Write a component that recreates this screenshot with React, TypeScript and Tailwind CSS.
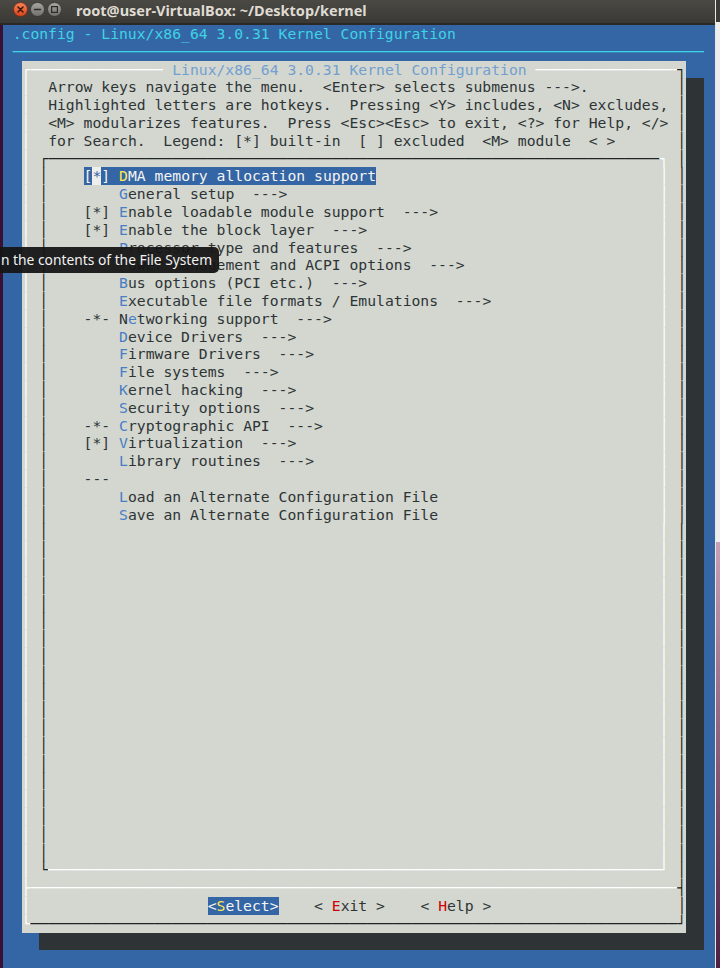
import React from "react";

// terminal colours (tango palette, as gnome-terminal draws it)
const FG = {
  ink: "text-[#2e3436]",
  line: "text-[#1f2324]",
  hi: "text-[#ffffff]",
  cyan: "text-[#3fd4e4]",
  title: "text-[#729fcf]",
  key: "text-[#4a7dc4]",
  sel: "text-[#f4f4f2]",
  yellow: "text-[#fce94f]",
  red: "text-[#cc0000]",
  cursor: "text-[#3465a4]",
} as const;

const BG = {
  blue: "bg-[#3465a4]",
  gray: "bg-[#d3d7cf]",
  shadow: "bg-[#2e3436]",
  cursor: "bg-[#eeeeec]",
} as const;

type Fg = keyof typeof FG;
type Bg = keyof typeof BG;
type Seg = { t: string; f: Fg; b: Bg };

const s = (t: string, f: Fg = "ink", b: Bg = "gray"): Seg => ({ t, f, b });
const sp = (n: number, b: Bg = "gray"): Seg => ({ t: " ".repeat(n), f: "ink", b });
const len = (segs: Seg[]) => segs.reduce((n, g) => n + g.t.length, 0);
const fill = (segs: Seg[], width: number, b: Bg = "gray") => {
  const n = width - len(segs);
  return n > 0 ? [...segs, sp(n, b)] : segs;
};
const h = (n: number, f: Fg) => s("─".repeat(n), f);

// one row of the dialog: cols 0-1 blue, 2 left edge, 3..75 body, 76 right edge, 77-78 shadow
function dlg(left: Seg, body: Seg[], right: Seg, shadow = true): Seg[] {
  return [sp(2, "blue"), left, ...fill(body, 73), right, sp(2, shadow ? "shadow" : "blue"), sp(1, "blue")];
}

const V_HI = s("│", "hi");
const V_DK = s("│", "line");

const PROMPT = [
  "Arrow keys navigate the menu.  <Enter> selects submenus --->.",
  "Highlighted letters are hotkeys.  Pressing <Y> includes, <N> excludes,",
  "<M> modularizes features.  Press <Esc><Esc> to exit, <?> for Help, </>",
  "for Search.  Legend: [*] built-in  [ ] excluded  <M> module  < >",
];

type Item = { p: string; a?: string; k: string; r: string };

const ITEMS: Item[] = [
  { p: "    ", k: "G", r: "eneral setup  --->" },
  { p: "[*] ", k: "E", r: "nable loadable module support  --->" },
  { p: "[*] ", k: "E", r: "nable the block layer  --->" },
  { p: "    ", k: "P", r: "rocessor type and features  --->" },
  { p: "    ", k: "P", r: "ower management and ACPI options  --->" },
  { p: "    ", k: "B", r: "us options (PCI etc.)  --->" },
  { p: "    ", k: "E", r: "xecutable file formats / Emulations  --->" },
  { p: "-*- ", a: "N", k: "e", r: "tworking support  --->" },
  { p: "    ", k: "D", r: "evice Drivers  --->" },
  { p: "    ", k: "F", r: "irmware Drivers  --->" },
  { p: "    ", k: "F", r: "ile systems  --->" },
  { p: "    ", k: "K", r: "ernel hacking  --->" },
  { p: "    ", k: "S", r: "ecurity options  --->" },
  { p: "-*- ", k: "C", r: "ryptographic API  --->" },
  { p: "[*] ", k: "V", r: "irtualization  --->" },
  { p: "    ", k: "L", r: "ibrary routines  --->" },
  { p: "---", k: "", r: "" },
  { p: "    ", k: "L", r: "oad an Alternate Configuration File" },
  { p: "    ", k: "S", r: "ave an Alternate Configuration File" },
];

function menuRow(content: Seg[]): Seg[] {
  return dlg(V_HI, [sp(1), s("│", "line"), ...fill(content, 69), s("│", "hi"), sp(1)], V_DK);
}

function buildRows(): Seg[][] {
  const rows: Seg[][] = [];
  rows.push(fill([sp(1, "blue"), s(".config - Linux/x86_64 3.0.31 Kernel Configuration", "cyan", "blue")], 80, "blue"));
  rows.push([sp(1, "blue"), s("─".repeat(78), "cyan", "blue"), sp(1, "blue")]);
  rows.push(
    dlg(
      s("┌", "hi"),
      [h(15, "hi"), sp(1), s("Linux/x86_64 3.0.31 Kernel Configuration", "title"), sp(1), h(16, "hi")],
      s("┐", "line"),
      false
    )
  );
  PROMPT.forEach((line) => rows.push(dlg(V_HI, [sp(2), s(line)], V_DK)));
  rows.push(dlg(V_HI, [sp(1), s("┌", "line"), h(69, "line"), s("┐", "hi"), sp(1)], V_DK));

  // selected entry, cursor sits on the '*'
  rows.push(
    menuRow([
      sp(4),
      s("[", "sel", "blue"),
      s("*", "cursor", "cursor"),
      s("] ", "sel", "blue"),
      s("D", "yellow", "blue"),
      s("MA memory allocation support", "sel", "blue"),
    ])
  );
  ITEMS.forEach((it) => {
    const segs: Seg[] = [sp(4), s(it.p)];
    if (it.a) segs.push(s(it.a));
    if (it.k) segs.push(s(it.k, "key"));
    if (it.r) segs.push(s(it.r));
    rows.push(menuRow(segs));
  });
  while (rows.length < 47) rows.push(menuRow([]));

  rows.push(dlg(V_HI, [sp(1), s("└", "line"), h(69, "hi"), s("┘", "hi"), sp(1)], V_DK));
  rows.push(dlg(s("├", "hi"), [h(73, "hi")], s("┤", "line")));
  rows.push(
    dlg(
      V_HI,
      [
        sp(20),
        s("<", "sel", "blue"),
        s("S", "yellow", "blue"),
        s("elect>", "sel", "blue"),
        sp(4),
        s("< "),
        s("E", "red"),
        s("xit >"),
        sp(4),
        s("< "),
        s("H", "red"),
        s("elp >"),
      ],
      V_DK
    )
  );
  rows.push(dlg(s("└", "hi"), [h(73, "line")], s("┘", "line")));
  rows.push([sp(4, "blue"), sp(75, "shadow"), sp(1, "blue")]);
  rows.push([sp(80, "blue")]);
  return rows;
}

// earlier rows stack above later ones so descenders (the '_') are not hidden
function Row({ segs, z }: { segs: Seg[]; z: number }) {
  return (
    <div className="relative flex h-[17.8px] whitespace-pre leading-[17.8px]" style={{ zIndex: z }}>
      {segs.map((g, i) => (
        <span key={i} className={`${FG[g.f]} ${BG[g.b]}`}>
          {g.t}
        </span>
      ))}
    </div>
  );
}

function WinButton({ kind }: { kind: "close" | "min" | "max" }) {
  const id = `wb-${kind}`;
  const isClose = kind === "close";
  return (
    <svg width="15" height="15" viewBox="0 0 15 15" className="shrink-0">
      <defs>
        <linearGradient id={id} x1="0" y1="0" x2="0" y2="1">
          <stop offset="0" stopColor={isClose ? "#f6865a" : "#a9a8a3"} />
          <stop offset="1" stopColor={isClose ? "#d9431a" : "#6f6e69"} />
        </linearGradient>
      </defs>
      <circle cx="7.5" cy="7.5" r="7" fill={`url(#${id})`} stroke={isClose ? "#6e2610" : "#33322f"} strokeWidth="0.8" />
      {kind === "close" && (
        <path d="M5 5l5 5M10 5l-5 5" stroke="#3a1608" strokeWidth="1.5" strokeLinecap="round" />
      )}
      {kind === "min" && <path d="M4.5 7.5h6" stroke="#2c2b28" strokeWidth="1.4" strokeLinecap="round" />}
      {kind === "max" && <rect x="4.6" y="4.6" width="5.8" height="5.8" fill="none" stroke="#2c2b28" strokeWidth="1.2" />}
    </svg>
  );
}

export default function App() {
  const rows = buildRows();

  return (
    <div className="relative flex h-[968px] w-[720px] overflow-hidden bg-[#3465a4]">
      <div className="flex w-[715px] shrink-0 flex-col">
        {/* window title bar */}
        <div className="flex h-[25px] shrink-0 items-start gap-[2px] border-b-2 border-[#2a2926] bg-gradient-to-b from-[#4a4944] to-[#3a3935] pl-[13px] pt-[2px]">
          <WinButton kind="close" />
          <WinButton kind="min" />
          <WinButton kind="max" />
          <span className="ml-[12px] font-['Noto_Sans',sans-serif] text-[14.5px] font-bold leading-[16px] text-[#dfdbd2]">
            root@user-VirtualBox: ~/Desktop/kernel
          </span>
        </div>

        <div className="flex flex-1">
          <div className="w-[3px] shrink-0 bg-[#3a1030]" />
          {/* terminal: 80 x 53 cells */}
          <div className="isolate pl-[0.8px] font-['DejaVu_Sans_Mono',monospace] text-[14.73px] leading-[17.8px]">
            {rows.map((r, i) => (
              <Row key={i} segs={r} z={rows.length - i} />
            ))}
          </div>
        </div>
      </div>

      {/* edge of the window behind */}
      <div className="flex w-[5px] shrink-0 flex-col border-l border-[#e8e8e8]">
        <div className="h-[22px] bg-[#3c3b37]" />
        <div className="h-[520px] bg-[#efeeec]" />
        <div className="flex-1 bg-gradient-to-b from-[#c9a0b6] to-[#4f1f40]" />
      </div>

      {/* tooltip from the desktop */}
      <div className="absolute left-0 top-[247px] z-10 flex h-[26px] w-[219px] items-center rounded-r-[5px] bg-[#161616]/95 pl-[1px] font-['Noto_Sans',sans-serif] text-[13.8px] whitespace-nowrap text-[#f2f2f2]">
        n the contents of the File System
      </div>
    </div>
  );
}
